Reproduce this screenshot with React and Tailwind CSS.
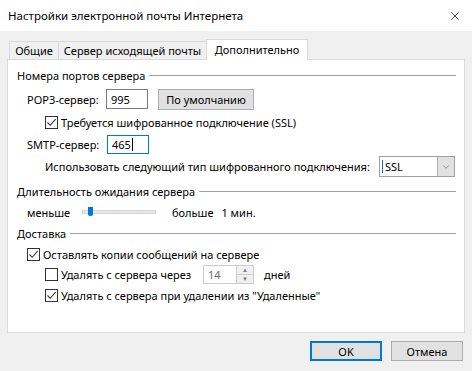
import { X, ChevronDown } from 'lucide-react';

const Check = ({ checked }) => (
  <span className="w-[13px] h-[13px] border border-[#333333] bg-white flex items-center justify-center shrink-0">
    {checked && (
      <svg width="11" height="11" viewBox="0 0 11 11" fill="none">
        <path d="M1.5 5.5 L4.2 8.3 L9.6 2.2" stroke="#333333" strokeWidth="1.1" />
      </svg>
    )}
  </span>
);

const GroupHead = ({ children }) => (
  <div className="h-4 flex items-center gap-[4px] pr-[8px]">
    <span className="whitespace-nowrap">{children}</span>
    <span className="flex-1 h-px bg-[#a0a0a0]" />
  </div>
);

const App = () => {
  return (
    <div
      className="w-[472px] h-[371px] bg-[#f0f0f0] text-[11px] text-black flex flex-col leading-none whitespace-nowrap"
      style={{ fontFamily: '"Noto Sans", "Open Sans", sans-serif' }}
    >
      {/* Title bar */}
      <div className="h-[31px] bg-white flex items-center justify-between pl-2 pr-[10px] text-[11.5px]">
        <span>Настройки электронной почты Интернета</span>
        <X size={14} strokeWidth={1.2} />
      </div>

      {/* Tabs */}
      <div className="flex items-end pl-[9px] mt-[7px] h-[21px]">
        <div className="w-[50px] h-[18px] border border-b-0 border-[#d9d9d9] flex items-center justify-center">Общие</div>
        <div className="w-[148px] h-[18px] border border-b-0 border-l-0 border-[#d9d9d9] flex items-center justify-center">
          Сервер исходящей почты
        </div>
        <div className="w-[102px] -ml-px h-[21px] bg-white border border-b-0 border-[#d9d9d9] -mb-px relative flex items-center justify-center pb-[2px]">
          Дополнительно
        </div>
      </div>

      {/* Panel */}
      <div className="mx-[7px] h-[274px] bg-white border border-[#d9d9d9] pl-[9px] flex flex-col">
        <div className="mt-[7px]">
          <GroupHead>Номера портов сервера</GroupHead>
        </div>

        <div className="mt-[6px] h-5 flex items-center pl-[10px]">
          <span className="w-[79px] shrink-0">POP3-сервер:</span>
          <div className="w-[42px] h-5 border border-[#7a7a7a] flex items-center pl-[4px]">995</div>
          <div className="ml-[10px] w-[96px] h-[21px] bg-[#e1e1e1] border border-[#adadad] flex items-center justify-center">
            По умолчанию
          </div>
        </div>

        <div className="mt-[5px] h-4 flex items-center gap-[3px] pl-[28px]">
          <Check checked />
          <span>Требуется шифрованное подключение (SSL)</span>
        </div>

        <div className="mt-[4px] h-5 flex items-center pl-[10px]">
          <span className="w-[80px] shrink-0">SMTP-сервер:</span>
          <div className="w-[42px] h-[19px] border border-[#0078d7] flex items-center pl-[4px]">
            465<span className="w-px h-[13px] bg-black ml-px" />
          </div>
        </div>

        <div className="mt-[2px] h-[21px] flex items-center pl-[28px]">
          <span className="w-[334px] shrink-0">Использовать следующий тип шифрованного подключения:</span>
          <div className="w-[76px] h-[21px] border border-[#a0a0a0] flex items-center">
            <span className="flex-1 pl-[2px] flex items-center">
              <span className="w-px h-[13px] bg-[#0078d7] mr-[2px]" />SSL
            </span>
            <span className="w-[17px] h-[19px] bg-[#e1e1e1] border-l border-[#adadad] flex items-center justify-center">
              <ChevronDown size={10} strokeWidth={1.2} color="#555" />
            </span>
          </div>
        </div>

        <div className="mt-[6px]">
          <GroupHead>Длительность ожидания сервера</GroupHead>
        </div>

        <div className="mt-[5px] h-4 flex items-center pl-[10px]">
          <span className="w-[55px] shrink-0">меньше</span>
          <div className="relative w-[74px] h-[4px] bg-[#e7e7e7] border border-[#d6d6d6]">
            <span className="absolute left-[5px] -top-[4px] w-[5px] h-[9px] bg-[#0078d7] rounded-b-[2px]" />
          </div>
          <span className="ml-[16px]">больше</span>
          <span className="ml-[8px]">1 мин.</span>
        </div>

        <div className="mt-[5px]">
          <GroupHead>Доставка</GroupHead>
        </div>

        <div className="mt-[5px] h-4 flex items-center gap-[3px] pl-[10px]">
          <Check checked />
          <span>Оставлять копии сообщений на сервере</span>
        </div>

        <div className="mt-[2px] h-5 flex items-center pl-[28px]">
          <Check />
          <span className="ml-[3px] w-[142px] shrink-0">Удалять с сервера через</span>
          <div className="w-[51px] h-[19px] border border-[#cccccc] flex items-center">
            <span className="flex-1 pl-[4px] text-[#6d6d6d]">14</span>
            <span className="w-[17px] h-full flex flex-col border-l border-[#cccccc] bg-[#f0f0f0]">
              <span className="flex-1 flex items-center justify-center text-[6px] text-[#7a7a7a] border-b border-[#cccccc]">▲</span>
              <span className="flex-1 flex items-center justify-center text-[6px] text-[#7a7a7a]">▼</span>
            </span>
          </div>
          <span className="ml-[10px]">дней</span>
        </div>

        <div className="mt-[3px] h-4 flex items-center gap-[3px] pl-[28px]">
          <Check checked />
          <span>Удалять с сервера при удалении из "Удаленные"</span>
        </div>
      </div>

      {/* Footer */}
      <div className="flex justify-end gap-[9px] pr-[9px] mt-[8px]">
        <div className="w-[72px] h-[20px] bg-[#e1e1e1] border-2 border-[#0078d7] flex items-center justify-center">OK</div>
        <div className="w-[72px] h-[20px] bg-[#e1e1e1] border border-[#adadad] flex items-center justify-center">Отмена</div>
      </div>
    </div>
  );
};

export default App;
